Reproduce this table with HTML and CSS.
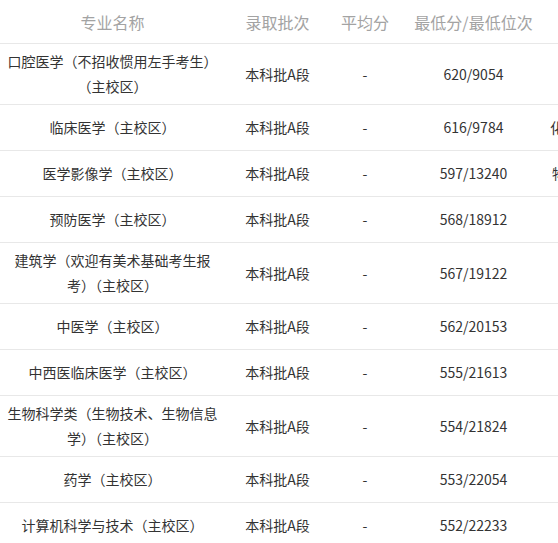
FILE: index.html
```html
<!DOCTYPE html>
<html lang="zh-CN">
<head>
<meta charset="utf-8">
<title>专业录取分数</title>
<link rel="stylesheet" href="styles.css">
</head>
<body>
<table class="score-table">
  <colgroup>
    <col class="c-name">
    <col class="c-batch">
    <col class="c-avg">
    <col class="c-min">
    <col class="c-extra">
  </colgroup>
  <thead>
    <tr>
      <th>专业名称</th>
      <th>录取批次</th>
      <th>平均分</th>
      <th>最低分/最低位次</th>
      <th class="extra"></th>
    </tr>
  </thead>
  <tbody>
    <tr><td>口腔医学（不招收惯用左手考生）（主校区）</td><td>本科批A段</td><td>-</td><td>620/9054</td><td class="extra"></td></tr>
    <tr><td>临床医学（主校区）</td><td>本科批A段</td><td>-</td><td>616/9784</td><td class="extra">化学</td></tr>
    <tr><td>医学影像学（主校区）</td><td>本科批A段</td><td>-</td><td>597/13240</td><td class="extra shift">物理</td></tr>
    <tr><td>预防医学（主校区）</td><td>本科批A段</td><td>-</td><td>568/18912</td><td class="extra"></td></tr>
    <tr><td>建筑学（欢迎有美术基础考生报考）（主校区）</td><td>本科批A段</td><td>-</td><td>567/19122</td><td class="extra"></td></tr>
    <tr><td>中医学（主校区）</td><td>本科批A段</td><td>-</td><td>562/20153</td><td class="extra"></td></tr>
    <tr><td>中西医临床医学（主校区）</td><td>本科批A段</td><td>-</td><td>555/21613</td><td class="extra"></td></tr>
    <tr><td>生物科学类（生物技术、生物信息学）（主校区）</td><td>本科批A段</td><td>-</td><td>554/21824</td><td class="extra"></td></tr>
    <tr><td>药学（主校区）</td><td>本科批A段</td><td>-</td><td>553/22054</td><td class="extra"></td></tr>
    <tr><td>计算机科学与技术（主校区）</td><td>本科批A段</td><td>-</td><td>552/22233</td><td class="extra"></td></tr>
  </tbody>
</table>
</body>
</html>
```

FILE: styles.css
```css
html, body {
  margin: 0;
  padding: 0;
  overflow: hidden;
  background: #fff;
}

body {
  font-family: "Noto Sans CJK SC", "Noto Sans", sans-serif;
  color: #333;
}

.score-table {
  border-collapse: collapse;
  table-layout: fixed;
  width: 700px;
}

.c-name { width: 225px; }
.c-batch { width: 105px; }
.c-avg { width: 70px; }
.c-min { width: 147px; }
.c-extra { width: 153px; }

.score-table th {
  height: 43px;
  padding: 0;
  font-size: 16px;
  font-weight: normal;
  color: #a3a3a3;
  text-align: center;
  vertical-align: middle;
  border-bottom: 1px solid #e8e8e8;
}

.score-table td {
  height: 35px;
  padding: 5px 7px;
  font-size: 14px;
  line-height: 25px;
  text-align: center;
  vertical-align: middle;
  border-bottom: 1px solid #e8e8e8;
}

.score-table .extra {
  text-align: left;
  padding-left: 3px;
}

.score-table td.shift {
  padding-left: 5px;
}
```
